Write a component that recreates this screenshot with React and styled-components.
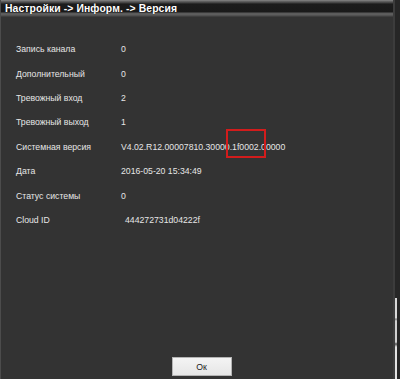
import React from 'react'
import styled, { createGlobalStyle } from 'styled-components'

const GlobalStyle = createGlobalStyle`
  html, body {
    margin: 0;
    padding: 0;
    background: #262626;
  }
  body {
    font-family: 'Liberation Sans', Arial, sans-serif;
  }
`

const Screen = styled.div`
  display: flex;
  width: 400px;
  height: 379px;
  overflow: hidden;
`

const Dialog = styled.div`
  display: flex;
  flex-direction: column;
  width: 393px;
  height: 379px;
  background: #333333;
  border-left: 1px solid #4c4c4c;
  box-sizing: border-box;
`

const TitleBar = styled.div`
  height: 17px;
  flex: none;
  box-sizing: border-box;
  padding-left: 4px;
  display: flex;
  align-items: center;
  color: #ffffff;
  font-weight: bold;
  font-size: 10.4px;
  letter-spacing: 0.1px;
  text-shadow: 0 0 1px #000;
  background: linear-gradient(
    to bottom,
    #8a8a8a 0px,
    #6a6a6a 1px,
    #3c3c3c 3px,
    #1c1c1c 4px,
    #1a1a1a 12px,
    #5a5a5a 13px,
    #5e5e5e 15px,
    #444 16px,
    #3a3a3a 17px
  );
`

const Body = styled.div`
  flex: 1;
  padding-top: 20px;
  display: flex;
  flex-direction: column;
`

const Row = styled.div`
  height: 24.4px;
  display: flex;
  align-items: center;
  font-size: 8.7px;
  color: #e6e6e6;
`

const Label = styled.div`
  width: 105px;
  padding-left: 15px;
  flex: none;
`

const Value = styled.div`
  position: relative;
  padding-left: ${p => (p.$indent ? 4 : 0)}px;
  white-space: nowrap;
`

const Highlight = styled.div`
  position: absolute;
  left: 105px;
  top: -13px;
  width: 36px;
  height: 25px;
  border: 2px solid #d21c1c;
`

const Footer = styled.div`
  height: 22px;
  display: flex;
  justify-content: center;
  align-items: flex-start;
  padding-left: 9px;
`

const OkButton = styled.button`
  width: 60px;
  height: 19px;
  padding: 0;
  background: linear-gradient(#f4f4f4, #e6e6e6);
  border: 1px solid #b4b4b4;
  color: #222;
  font-family: 'Liberation Sans', Arial, sans-serif;
  font-size: 8.7px;
`

const EdgeStrip = styled.div`
  flex: 1;
  display: flex;
  border-left: 2px solid #3c3c3c;
`

const EdgeLight = styled.div`
  width: 2px;
  margin-top: 298px;
  background: linear-gradient(
    to bottom,
    #d8d8d8 0px,
    #d8d8d8 20px,
    #7a7a7a 21px,
    #d0d0d0 23px,
    #d0d0d0 44px,
    #555 46px,
    #e2e2e2 49px
  );
`

const rows = [
  ['Запись канала', '0'],
  ['Дополнительный', '0'],
  ['Тревожный вход', '2'],
  ['Тревожный выход', '1'],
  ['Системная версия', 'V4.02.R12.00007810.30000.1f0002.00000', 'mark'],
  ['Дата', '2016-05-20 15:34:49'],
  ['Статус системы', '0'],
  ['Cloud ID', '444272731d04222f', 'indent'],
]

export default function App() {
  return (
    <>
      <GlobalStyle />
      <Screen>
        <Dialog>
          <TitleBar>Настройки -&gt; Информ. -&gt; Версия</TitleBar>
          <Body>
            {rows.map(([label, value, flag]) => (
              <Row key={label}>
                <Label>{label}</Label>
                <Value $indent={flag === 'indent'}>
                  {value}
                  {flag === 'mark' && <Highlight />}
                </Value>
              </Row>
            ))}
          </Body>
          <Footer>
            <OkButton>Ок</OkButton>
          </Footer>
        </Dialog>
        <EdgeStrip>
          <EdgeLight />
        </EdgeStrip>
      </Screen>
    </>
  )
}
